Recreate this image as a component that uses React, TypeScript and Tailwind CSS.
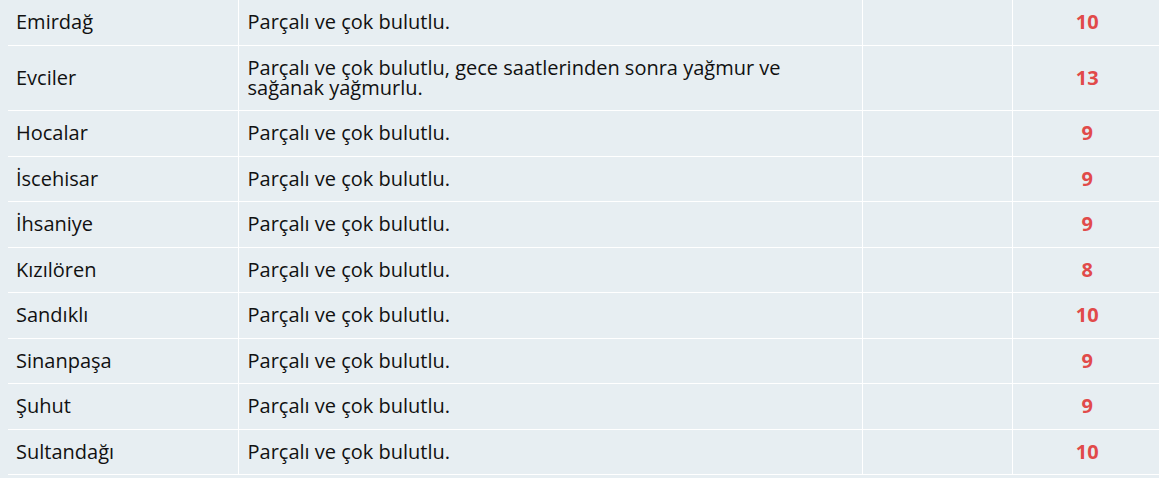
const rows: { name: string; desc: string; temp: number }[] = [
  { name: "Emirdağ", desc: "Parçalı ve çok bulutlu.", temp: 10 },
  {
    name: "Evciler",
    desc: "Parçalı ve çok bulutlu, gece saatlerinden sonra yağmur ve sağanak yağmurlu.",
    temp: 13,
  },
  { name: "Hocalar", desc: "Parçalı ve çok bulutlu.", temp: 9 },
  { name: "İscehisar", desc: "Parçalı ve çok bulutlu.", temp: 9 },
  { name: "İhsaniye", desc: "Parçalı ve çok bulutlu.", temp: 9 },
  { name: "Kızılören", desc: "Parçalı ve çok bulutlu.", temp: 8 },
  { name: "Sandıklı", desc: "Parçalı ve çok bulutlu.", temp: 10 },
  { name: "Sinanpaşa", desc: "Parçalı ve çok bulutlu.", temp: 9 },
  { name: "Şuhut", desc: "Parçalı ve çok bulutlu.", temp: 9 },
  { name: "Sultandağı", desc: "Parçalı ve çok bulutlu.", temp: 10 },
];

export default function App() {
  return (
    <div className="h-[478px] w-[1159px] overflow-hidden bg-[#e7eef2] pl-2 font-['Open_Sans',sans-serif] text-[20px] text-[#111]">
      <table className="w-[1154px] table-fixed border-collapse">
        <colgroup>
          <col className="w-[230px]" />
          <col className="w-[624px]" />
          <col className="w-[150px]" />
          <col className="w-[150px]" />
        </colgroup>
        <tbody>
          {rows.map((r) => (
            <tr key={r.name} className="border-b border-white">
              <td className="border-r border-white px-2 py-[12.25px] leading-[20px]">
                {r.name}
              </td>
              <td className="border-r border-white py-[12.25px] pl-[9px] pr-2 leading-[20px]">
                {r.desc}
              </td>
              <td className="border-r border-white" />
              <td className="text-center font-bold text-[#e14a4a]">{r.temp}</td>
            </tr>
          ))}
        </tbody>
      </table>
    </div>
  );
}
